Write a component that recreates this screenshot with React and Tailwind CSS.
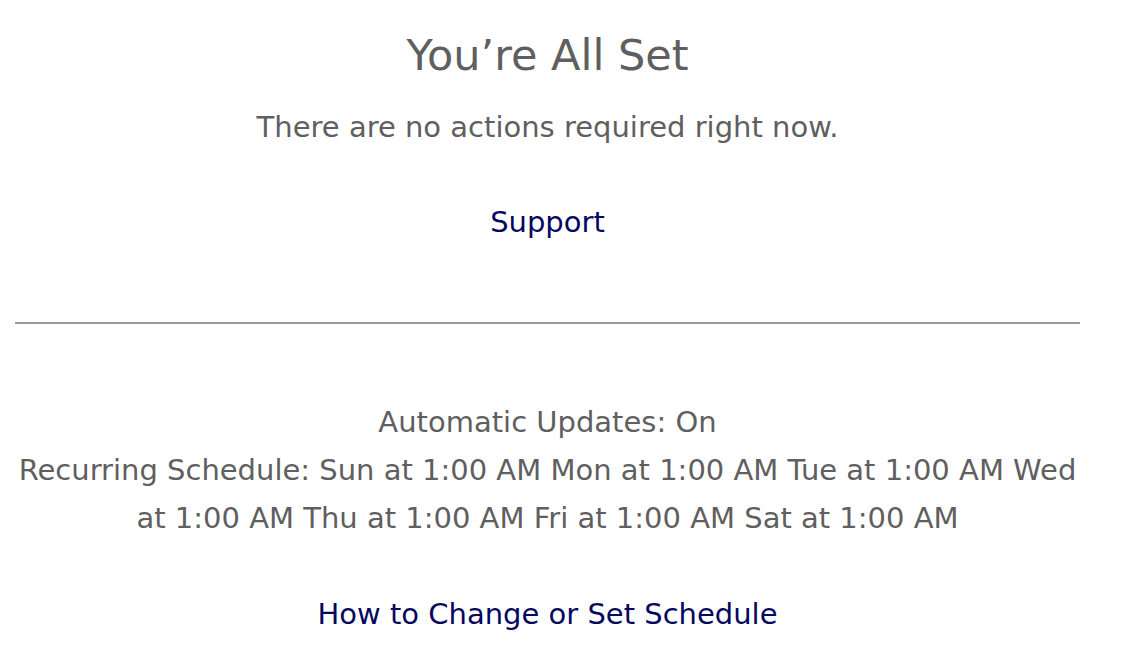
export default function App() {
  return (
    <div className="min-h-screen bg-white" style={{ fontFamily: '"DejaVu Sans", sans-serif' }}>
      <div className="ml-[15px] w-[1065px] text-center">
        {/* Status */}
        <div className="pt-[25px]">
          <h1 className="text-[43px] leading-[60px] font-normal text-[#5f5f5f]">You’re All Set</h1>
          <p className="mt-[22px] text-[29px] leading-[40px] text-[#5f5f5f]">There are no actions required right now.</p>
          <a href="#" className="mt-[55px] inline-block text-[29px] leading-[40px] text-[#05085e]">Support</a>
        </div>

        <hr className="mt-[80px] border-0 border-t-2 border-[#999999]" />

        {/* Schedule */}
        <div className="mt-[74px] text-[29px] leading-[48px] text-[#5f5f5f]">
          <p>Automatic Updates: On</p>
          <p>
            Recurring Schedule: Sun at 1:00 AM Mon at 1:00 AM Tue at 1:00 AM Wed at 1:00 AM Thu at 1:00 AM Fri at 1:00 AM Sat at 1:00 AM
          </p>
        </div>
        <a href="#" className="mt-[52px] inline-block text-[29px] leading-[40px] text-[#05085e]">How to Change or Set Schedule</a>
      </div>
    </div>
  );
}
